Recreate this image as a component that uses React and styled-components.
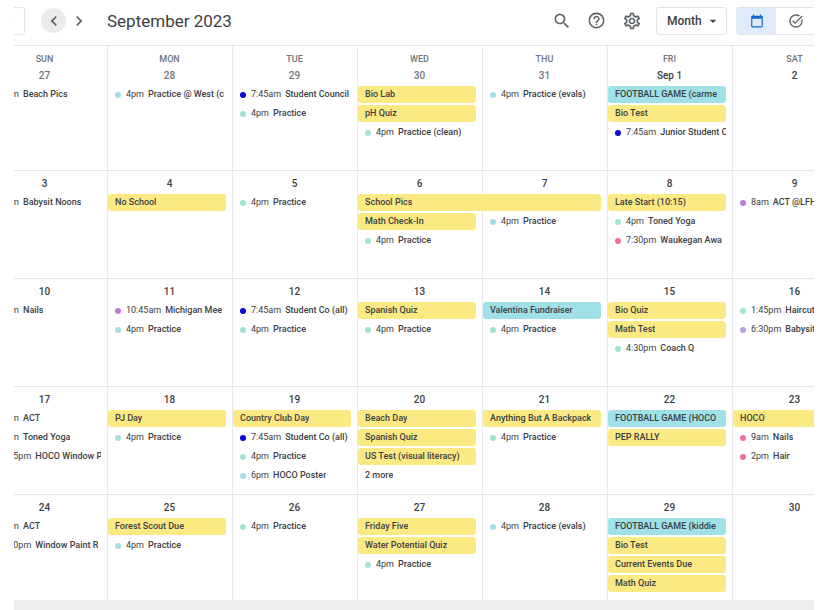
import React from 'react'
import styled, { createGlobalStyle } from 'styled-components';
import { MdSearch, MdHelpOutline, MdOutlineSettings, MdCalendarToday, MdTaskAlt, MdChevronLeft, MdChevronRight, MdArrowDropDown } from 'react-icons/md';

const GlobalStyle = createGlobalStyle`
    * {
        box-sizing: border-box;
    }
    body {
        margin: 0;
        background-color: #ffffff;
        font-family: Roboto, "Liberation Sans", sans-serif;
        color: #3c4043;
    }
    button, select {
        font-family: inherit;
        color: inherit;
        margin: 0;
        padding: 0;
        border: none;
        background: none;
        cursor: pointer;
    }
`

const Main = styled.div`
    display: flex;
    flex-direction: column;
    min-height: 100vh;
    padding: 0 6px 0 14px;
`

const Header = styled.header`
    display: flex;
    align-items: center;
    flex-shrink: 0;
    height: 45px;
    padding-bottom: 4px;
    overflow: hidden;
`

const TodayButton = styled.button`
    flex-shrink: 0;
    width: 57px;
    height: 28px;
    margin-left: -46px;
    margin-right: 16px;
    border: 1px solid #e4e5e7;
    border-radius: 3px;
    font-size: 13px;
    font-weight: 500;
`

const RoundButton = styled.button`
    display: flex;
    align-items: center;
    justify-content: center;
    flex-shrink: 0;
    width: 25px;
    height: 25px;
    border-radius: 50%;
    color: #5f6368;
    background-color: ${p => p.$active ? '#ebebec' : 'transparent'};
`

const Title = styled.h1`
    flex: 1;
    margin: 0 0 0 16px;
    font-size: 17px;
    font-weight: 400;
    line-height: 24px;
    white-space: nowrap;
`

const Tools = styled.div`
    display: flex;
    align-items: center;
    gap: 10px;
    margin-right: 12px;
`

const SelectBox = styled.label`
    display: flex;
    align-items: center;
    position: relative;
    flex-shrink: 0;
    width: 71px;
    height: 28px;
    margin-right: 9px;
    border: 1px solid #e4e5e7;
    border-radius: 3px;
    svg {
        position: absolute;
        right: 5px;
        pointer-events: none;
    }
`

const ViewSelect = styled.select`
    appearance: none;
    width: 100%;
    height: 100%;
    padding-left: 10px;
    font-size: 12px;
    font-weight: 500;
    outline: none;
`

const Switch = styled.div`
    display: flex;
    flex-shrink: 0;
    height: 28px;
    margin-right: -2px;
    border: 1px solid #e4e5e7;
    border-radius: 3px;
`

const SwitchButton = styled.button`
    display: flex;
    align-items: center;
    justify-content: center;
    width: 39px;
    color: ${p => p.$active ? '#1967d2' : '#5f6368'};
    background-color: ${p => p.$active ? '#dfebfb' : 'transparent'};
`

const Calendar = styled.main`
    display: flex;
    flex: 1;
    flex-direction: column;
    overflow: hidden;
`

// the outer columns run past both edges of the window
const Week = styled.section`
    display: grid;
    grid-template-columns: repeat(7, minmax(0, 1fr));
    grid-template-rows: auto repeat(4, 19px) 1fr;
    min-height: 108px;
    margin: 0 -43px 0 -32px;
    &:first-child {
        min-height: 125px;
    }
    &:last-child {
        flex: 1;
        min-height: 105px;
    }
`

const Day = styled.div`
    grid-column: ${p => p.$col};
    grid-row: 1 / -1;
    border-top: 1px solid #e4e5e6;
    border-left: 1px solid #e8e9ea;
`

const DayHead = styled.div`
    grid-column: ${p => p.$col};
    grid-row: 1;
    padding: 7px 0 3px;
    font-size: 10px;
    font-weight: 500;
    line-height: 14px;
    text-align: center;
    color: ${p => p.$other ? '#70757a' : '#3c4043'};
`

const WeekDay = styled.div`
    padding-bottom: 3px;
    font-size: 9px;
    color: #70757a;
`

const Item = styled.button`
    display: flex;
    align-items: center;
    grid-column: ${p => p.$col} / span ${p => p.$span || 1};
    grid-row: ${p => p.$row};
    height: 17px;
    margin: 0 6px 0 1px;
    padding: 0 0 0 7px;
    border-radius: 3px;
    font-size: 9px;
    font-weight: 500;
    line-height: 17px;
    text-align: left;
    white-space: nowrap;
    overflow: hidden;
`

const Bar = styled(Item)`
    padding-right: 6px;
    background-color: ${p => p.$color};
`

const Dot = styled.span`
    flex-shrink: 0;
    width: 6px;
    height: 6px;
    margin-right: 5px;
    border-radius: 50%;
    background-color: ${p => p.$color};
`

const Time = styled.span`
    flex-shrink: 0;
    margin-right: 4px;
    font-weight: 400;
`

const Name = styled.span`
    overflow: hidden;
`

const Bottom = styled.footer`
    flex-shrink: 0;
    height: 10px;
    background-color: #ededed;
`

const yellow = '#fbe983'
const aqua = '#9fe1e7'
const mint = '#9fe5d3'
const sky = '#a5dde8'
const blue = '#0a05d8'
const purple = '#bd7adb'
const lavender = '#b8a1e3'
const pink = '#f26d9f'

const weekDays = ['SUN', 'MON', 'TUE', 'WED', 'THU', 'FRI', 'SAT']

// col and row are counted from 1, an item without a time is drawn as a bar
const weeks = [
    {
        days: ['27', '28', '29', '30', '31', 'Sep 1', '2'],
        other: 5,
        items: [
            { col: 1, row: 1, time: '4pm', name: 'Beach Pics', color: mint },
            { col: 2, row: 1, time: '4pm', name: 'Practice @ West (c', color: sky },
            { col: 3, row: 1, time: '7:45am', name: 'Student Council', color: blue },
            { col: 3, row: 2, time: '4pm', name: 'Practice', color: mint },
            { col: 4, row: 1, name: 'Bio Lab', color: yellow },
            { col: 4, row: 2, name: 'pH Quiz', color: yellow },
            { col: 4, row: 3, time: '4pm', name: 'Practice (clean)', color: mint },
            { col: 5, row: 1, time: '4pm', name: 'Practice (evals)', color: sky },
            { col: 6, row: 1, name: 'FOOTBALL GAME (carme', color: aqua },
            { col: 6, row: 2, name: 'Bio Test', color: yellow },
            { col: 6, row: 3, time: '7:45am', name: 'Junior Student C', color: blue },
        ],
    },
    {
        days: ['3', '4', '5', '6', '7', '8', '9'],
        items: [
            { col: 1, row: 1, time: '4pm', name: 'Babysit Noons', color: purple },
            { col: 2, row: 1, name: 'No School', color: yellow },
            { col: 3, row: 1, time: '4pm', name: 'Practice', color: mint },
            { col: 4, span: 2, row: 1, name: 'School Pics', color: yellow },
            { col: 4, row: 2, name: 'Math Check-In', color: yellow },
            { col: 4, row: 3, time: '4pm', name: 'Practice', color: mint },
            { col: 5, row: 2, time: '4pm', name: 'Practice', color: sky },
            { col: 6, row: 1, name: 'Late Start (10:15)', color: yellow },
            { col: 6, row: 2, time: '4pm', name: 'Toned Yoga', color: mint },
            { col: 6, row: 3, time: '7:30pm', name: 'Waukegan Awa', color: pink },
            { col: 7, row: 1, time: '8am', name: 'ACT @LFHS', color: purple },
        ],
    },
    {
        days: ['10', '11', '12', '13', '14', '15', '16'],
        items: [
            { col: 1, row: 1, time: '4pm', name: 'Nails', color: pink },
            { col: 2, row: 1, time: '10:45am', name: 'Michigan Mee', color: purple },
            { col: 2, row: 2, time: '4pm', name: 'Practice', color: mint },
            { col: 3, row: 1, time: '7:45am', name: 'Student Co (all)', color: blue },
            { col: 3, row: 2, time: '4pm', name: 'Practice', color: mint },
            { col: 4, row: 1, name: 'Spanish Quiz', color: yellow },
            { col: 4, row: 2, time: '4pm', name: 'Practice', color: mint },
            { col: 5, row: 1, name: 'Valentina Fundraiser', color: aqua },
            { col: 5, row: 2, time: '4pm', name: 'Practice', color: mint },
            { col: 6, row: 1, name: 'Bio Quiz', color: yellow },
            { col: 6, row: 2, name: 'Math Test', color: yellow },
            { col: 6, row: 3, time: '4:30pm', name: 'Coach Q', color: mint },
            { col: 7, row: 1, time: '1:45pm', name: 'Haircut', color: mint },
            { col: 7, row: 2, time: '6:30pm', name: 'Babysit', color: lavender },
        ],
    },
    {
        days: ['17', '18', '19', '20', '21', '22', '23'],
        items: [
            { col: 1, row: 1, time: '4pm', name: 'ACT', color: purple },
            { col: 1, row: 2, time: '4pm', name: 'Toned Yoga', color: mint },
            { col: 1, row: 3, time: '4:45pm', name: 'HOCO Window P', color: sky },
            { col: 2, row: 1, name: 'PJ Day', color: yellow },
            { col: 2, row: 2, time: '4pm', name: 'Practice', color: mint },
            { col: 3, row: 1, name: 'Country Club Day', color: yellow },
            { col: 3, row: 2, time: '7:45am', name: 'Student Co (all)', color: blue },
            { col: 3, row: 3, time: '4pm', name: 'Practice', color: mint },
            { col: 3, row: 4, time: '6pm', name: 'HOCO Poster', color: sky },
            { col: 4, row: 1, name: 'Beach Day', color: yellow },
            { col: 4, row: 2, name: 'Spanish Quiz', color: yellow },
            { col: 4, row: 3, name: 'US Test (visual literacy)', color: yellow },
            { col: 4, row: 4, name: '2 more', color: 'transparent' },
            { col: 5, row: 1, name: 'Anything But A Backpack', color: yellow },
            { col: 5, row: 2, time: '4pm', name: 'Practice', color: mint },
            { col: 6, row: 1, name: 'FOOTBALL GAME (HOCO', color: aqua },
            { col: 6, row: 2, name: 'PEP RALLY', color: yellow },
            { col: 7, row: 1, name: 'HOCO', color: yellow },
            { col: 7, row: 2, time: '9am', name: 'Nails', color: pink },
            { col: 7, row: 3, time: '2pm', name: 'Hair', color: pink },
        ],
    },
    {
        days: ['24', '25', '26', '27', '28', '29', '30'],
        items: [
            { col: 1, row: 1, time: '4pm', name: 'ACT', color: purple },
            { col: 1, row: 2, time: '4:30pm', name: 'Window Paint R', color: sky },
            { col: 2, row: 1, name: 'Forest Scout Due', color: yellow },
            { col: 2, row: 2, time: '4pm', name: 'Practice', color: mint },
            { col: 3, row: 1, time: '4pm', name: 'Practice', color: mint },
            { col: 4, row: 1, name: 'Friday Five', color: yellow },
            { col: 4, row: 2, name: 'Water Potential Quiz', color: yellow },
            { col: 4, row: 3, time: '4pm', name: 'Practice', color: mint },
            { col: 5, row: 1, time: '4pm', name: 'Practice (evals)', color: sky },
            { col: 6, row: 1, name: 'FOOTBALL GAME (kiddie', color: aqua },
            { col: 6, row: 2, name: 'Bio Test', color: yellow },
            { col: 6, row: 3, name: 'Current Events Due', color: yellow },
            { col: 6, row: 4, name: 'Math Quiz', color: yellow },
        ],
    },
]

const Event = ({ item }) => {
    const place = { $col: item.col, $span: item.span, $row: item.row + 1 }
    if (!item.time) {
        return <Bar {...place} $color={item.color}><Name>{item.name}</Name></Bar>
    }
    return (
        <Item {...place}>
            <Dot $color={item.color} />
            <Time>{item.time}</Time>
            <Name>{item.name}</Name>
        </Item>
    )
}

export default (() => {
    return (
        <Main>
            <GlobalStyle />
            <Header>
                <TodayButton>Today</TodayButton>
                <RoundButton $active aria-label="Previous month"><MdChevronLeft size={20} /></RoundButton>
                <RoundButton aria-label="Next month"><MdChevronRight size={20} /></RoundButton>
                <Title>September 2023</Title>
                <Tools>
                    <RoundButton aria-label="Search"><MdSearch size={20} /></RoundButton>
                    <RoundButton aria-label="Help"><MdHelpOutline size={19} /></RoundButton>
                    <RoundButton aria-label="Settings"><MdOutlineSettings size={20} /></RoundButton>
                </Tools>
                <SelectBox>
                    <ViewSelect aria-label="View" defaultValue="Month">
                        <option>Month</option>
                    </ViewSelect>
                    <MdArrowDropDown size={16} />
                </SelectBox>
                <Switch>
                    <SwitchButton $active aria-label="Calendar"><MdCalendarToday size={14} /></SwitchButton>
                    <SwitchButton aria-label="Tasks"><MdTaskAlt size={16} /></SwitchButton>
                </Switch>
            </Header>
            <Calendar>
                {weeks.map((week, w) => (
                    <Week key={w}>
                        {week.days.map((day, i) => <Day key={day} $col={i + 1} />)}
                        {week.days.map((day, i) => (
                            <DayHead key={day} $col={i + 1} $other={i < week.other}>
                                {w === 0 && <WeekDay>{weekDays[i]}</WeekDay>}
                                {day}
                            </DayHead>
                        ))}
                        {week.items.map(item => <Event key={item.col + '-' + item.row} item={item} />)}
                    </Week>
                ))}
            </Calendar>
            <Bottom />
        </Main>
    )
})
